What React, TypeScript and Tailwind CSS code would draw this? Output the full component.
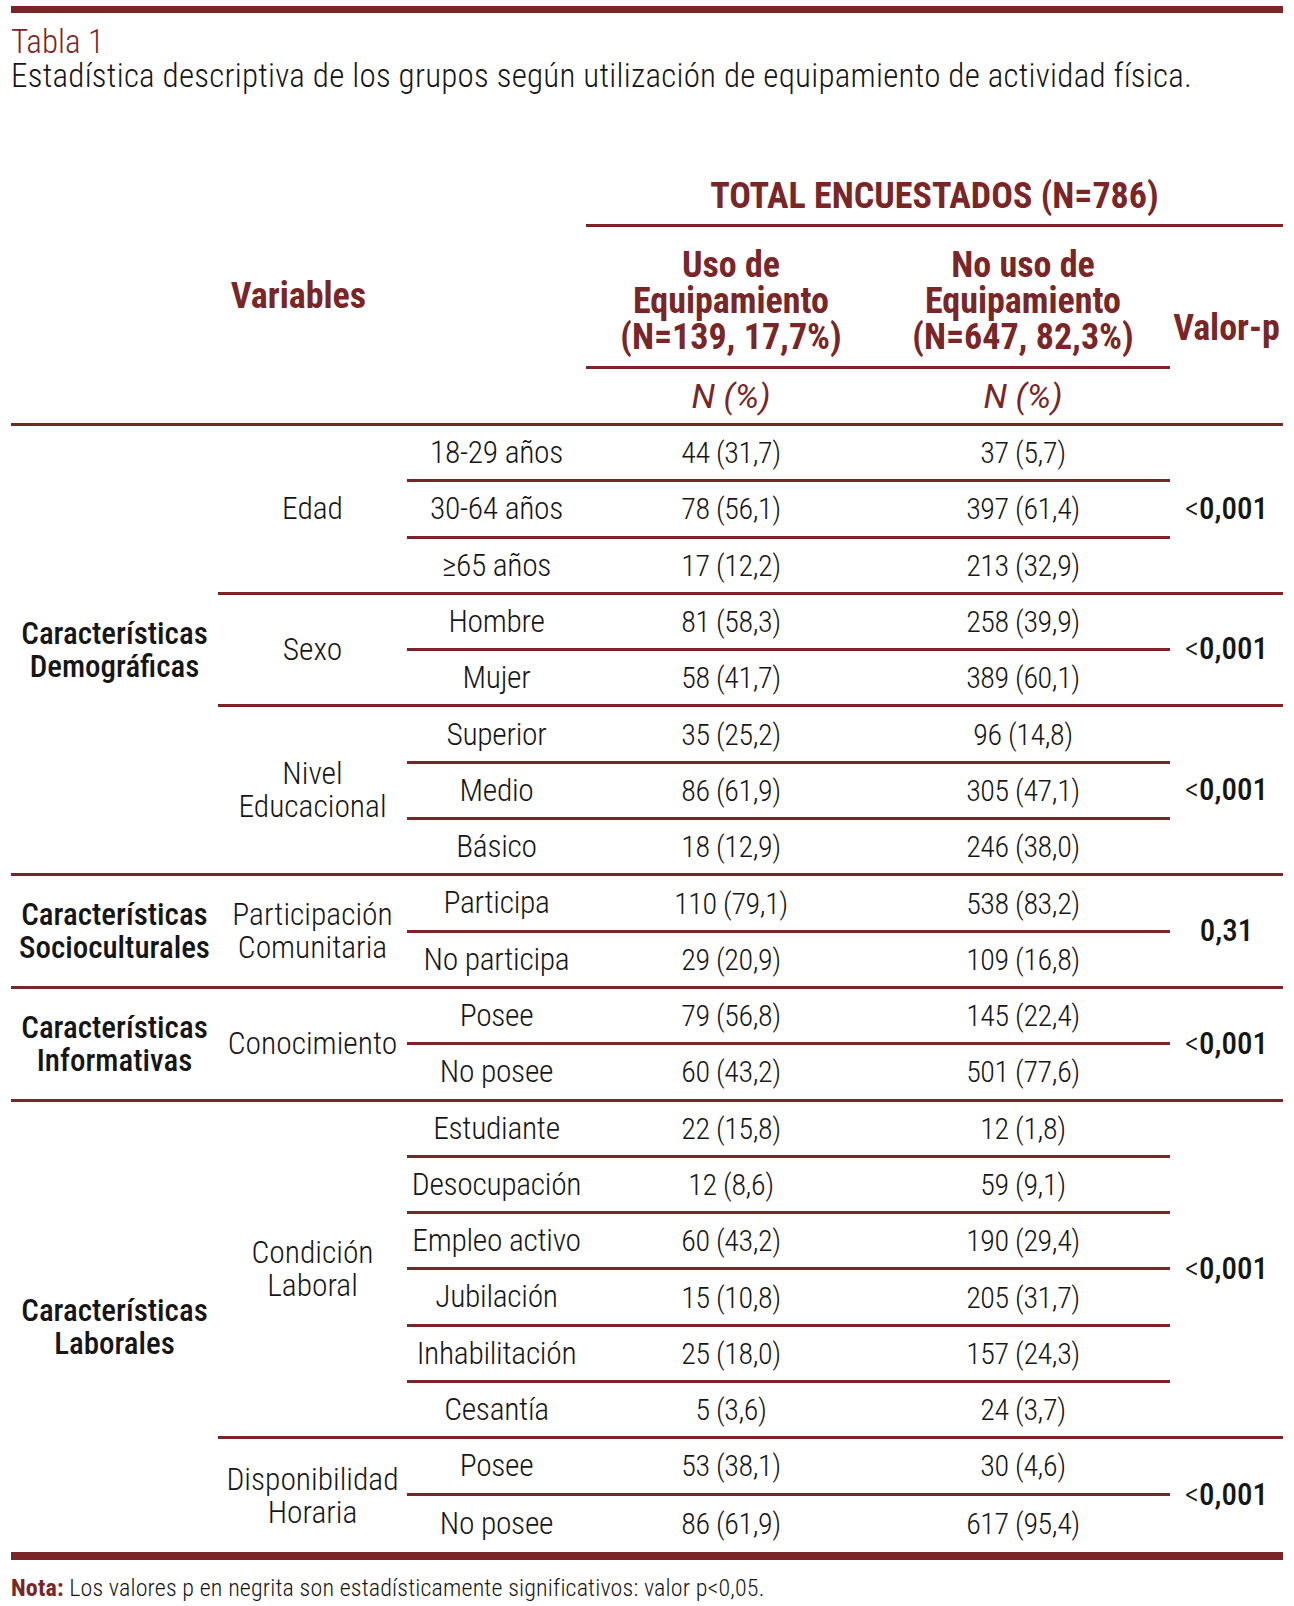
import React from 'react';

type Row = [string, string, string];
type Group = { name: string[]; p: string; rows: Row[] };
type Section = { title: string[]; groups: Group[] };

const sections: Section[] = [
  {
    title: ['Características', 'Demográficas'],
    groups: [
      {
        name: ['Edad'],
        p: '<0,001',
        rows: [
          ['18-29 años', '44 (31,7)', '37 (5,7)'],
          ['30-64 años', '78 (56,1)', '397 (61,4)'],
          ['≥65 años', '17 (12,2)', '213 (32,9)'],
        ],
      },
      {
        name: ['Sexo'],
        p: '<0,001',
        rows: [
          ['Hombre', '81 (58,3)', '258 (39,9)'],
          ['Mujer', '58 (41,7)', '389 (60,1)'],
        ],
      },
      {
        name: ['Nivel', 'Educacional'],
        p: '<0,001',
        rows: [
          ['Superior', '35 (25,2)', '96 (14,8)'],
          ['Medio', '86 (61,9)', '305 (47,1)'],
          ['Básico', '18 (12,9)', '246 (38,0)'],
        ],
      },
    ],
  },
  {
    title: ['Características', 'Socioculturales'],
    groups: [
      {
        name: ['Participación', 'Comunitaria'],
        p: '0,31',
        rows: [
          ['Participa', '110 (79,1)', '538 (83,2)'],
          ['No participa', '29 (20,9)', '109 (16,8)'],
        ],
      },
    ],
  },
  {
    title: ['Características', 'Informativas'],
    groups: [
      {
        name: ['Conocimiento'],
        p: '<0,001',
        rows: [
          ['Posee', '79 (56,8)', '145 (22,4)'],
          ['No posee', '60 (43,2)', '501 (77,6)'],
        ],
      },
    ],
  },
  {
    title: ['Características', 'Laborales'],
    groups: [
      {
        name: ['Condición', 'Laboral'],
        p: '<0,001',
        rows: [
          ['Estudiante', '22 (15,8)', '12 (1,8)'],
          ['Desocupación', '12 (8,6)', '59 (9,1)'],
          ['Empleo activo', '60 (43,2)', '190 (29,4)'],
          ['Jubilación', '15 (10,8)', '205 (31,7)'],
          ['Inhabilitación', '25 (18,0)', '157 (24,3)'],
          ['Cesantía', '5 (3,6)', '24 (3,7)'],
        ],
      },
      {
        name: ['Disponibilidad', 'Horaria'],
        p: '<0,001',
        rows: [
          ['Posee', '53 (38,1)', '30 (4,6)'],
          ['No posee', '86 (61,9)', '617 (95,4)'],
        ],
      },
    ],
  },
];

const TOTAL_ROWS = 20;
const line = 'border-b-[3px] border-[#7a2527]';
const cell = 'flex items-center justify-center text-center whitespace-nowrap';

function PValue({ value }: { value: string }) {
  if (value.startsWith('<')) {
    return (
      <span className="text-[31px]">
        <span className="font-light">&lt;</span>
        <span className="font-medium">{value.slice(1)}</span>
      </span>
    );
  }
  return <span className="text-[31px] font-medium">{value}</span>;
}

function Lines({ items }: { items: string[] }) {
  return (
    <div>
      {items.map((t) => (
        <div key={t}>{t}</div>
      ))}
    </div>
  );
}

export default function App() {
  // every cell is placed on the 20-row body grid
  const cells: React.ReactNode[] = [];
  let r = 1;
  sections.forEach((section, si) => {
    const secRows = section.groups.reduce((n, g) => n + g.rows.length, 0);
    const secEnd = r + secRows - 1;
    cells.push(
      <div
        key={`s${si}`}
        className={`col-start-1 ${cell} font-medium text-[31px] leading-[33px] ${secEnd < TOTAL_ROWS ? line : ''}`}
        style={{ gridRow: `${r} / span ${secRows}` }}
      >
        <Lines items={section.title} />
      </div>
    );
    section.groups.forEach((group, gi) => {
      const n = group.rows.length;
      const gEnd = r + n - 1;
      const border = gEnd < TOTAL_ROWS ? line : '';
      cells.push(
        <div
          key={`g${si}-${gi}`}
          className={`col-start-2 ${cell} font-light text-[31.5px] leading-[33px] ${border}`}
          style={{ gridRow: `${r} / span ${n}` }}
        >
          <Lines items={group.name} />
        </div>,
        <div
          key={`p${si}-${gi}`}
          className={`col-start-6 ${cell} ${border}`}
          style={{ gridRow: `${r} / span ${n}` }}
        >
          <PValue value={group.p} />
        </div>
      );
      group.rows.forEach((row) => {
        const rowBorder = r < TOTAL_ROWS ? line : '';
        cells.push(
          <div key={`a${r}`} className={`col-start-3 ${cell} font-light text-[31.5px] tracking-[-0.3px] ${rowBorder}`} style={{ gridRow: `${r}` }}>
            {row[0]}
          </div>,
          <div key={`b${r}`} className={`col-start-4 ${cell} font-light text-[30px] tracking-[-0.4px] ${rowBorder}`} style={{ gridRow: `${r}` }}>
            {row[1]}
          </div>,
          <div key={`c${r}`} className={`col-start-5 ${cell} font-light text-[30px] tracking-[-0.4px] ${rowBorder}`} style={{ gridRow: `${r}` }}>
            {row[2]}
          </div>
        );
        r += 1;
      });
    });
  });

  return (
    <div className="min-h-[1606px] w-[1294px] bg-white pt-[6px] font-['Roboto',sans-serif] [font-stretch:75%] text-[#161616]">
      <div className="ml-[11px] h-[7px] w-[1272px] bg-[#7a2527]" />

      <div className="ml-[11px] mt-[12px]">
        <div className="text-[33px] leading-[34px] font-light text-[#7a2527]">Tabla 1</div>
        <div className="text-[33px] leading-[34px] font-light tracking-[0.25px]">
          Estadística descriptiva de los grupos según utilización de equipamiento de actividad física.
        </div>
      </div>

      {/* Header */}
      <div className="ml-[11px] mt-[75px] grid w-[1272px] grid-cols-[207px_189px_179px_290px_294px_113px] grid-rows-[59px_142px_54px] border-b-[3px] border-[#7a2527] font-bold text-[36px] leading-[36px] text-[#7a2527]">
        <div className={`col-span-3 col-start-1 row-span-3 row-start-1 ${cell}`}>Variables</div>
        <div className={`col-span-3 col-start-4 row-start-1 ${cell} ${line}`}>TOTAL ENCUESTADOS (N=786)</div>
        <div className={`col-start-4 row-start-2 ${cell} pt-[8px] ${line}`}>
          <Lines items={['Uso de', 'Equipamiento', '(N=139, 17,7%)']} />
        </div>
        <div className={`col-start-5 row-start-2 ${cell} pt-[8px] ${line}`}>
          <Lines items={['No uso de', 'Equipamiento', '(N=647, 82,3%)']} />
        </div>
        <div className={`col-start-6 row-span-2 row-start-2 ${cell} pt-[6px]`}>Valor-p</div>
        <div className={`col-start-4 row-start-3 ${cell} font-normal italic text-[34px] [font-stretch:100%]`}>N (%)</div>
        <div className={`col-start-5 row-start-3 ${cell} font-normal italic text-[34px] [font-stretch:100%]`}>N (%)</div>
      </div>

      {/* Body */}
      <div className="ml-[11px] grid w-[1272px] grid-cols-[207px_189px_179px_290px_294px_113px] grid-rows-[repeat(20,56.3px)]">
        {cells}
      </div>
      <div className="ml-[11px] h-[8px] w-[1272px] bg-[#7a2527]" />

      <div className="ml-[11px] mt-[15px] text-[24px] leading-[27px] font-light tracking-[0.15px]">
        <span className="font-bold text-[#7a2527]">Nota:</span> Los valores p en negrita son estadísticamente
        significativos: valor p&lt;0,05.
      </div>
    </div>
  );
}
